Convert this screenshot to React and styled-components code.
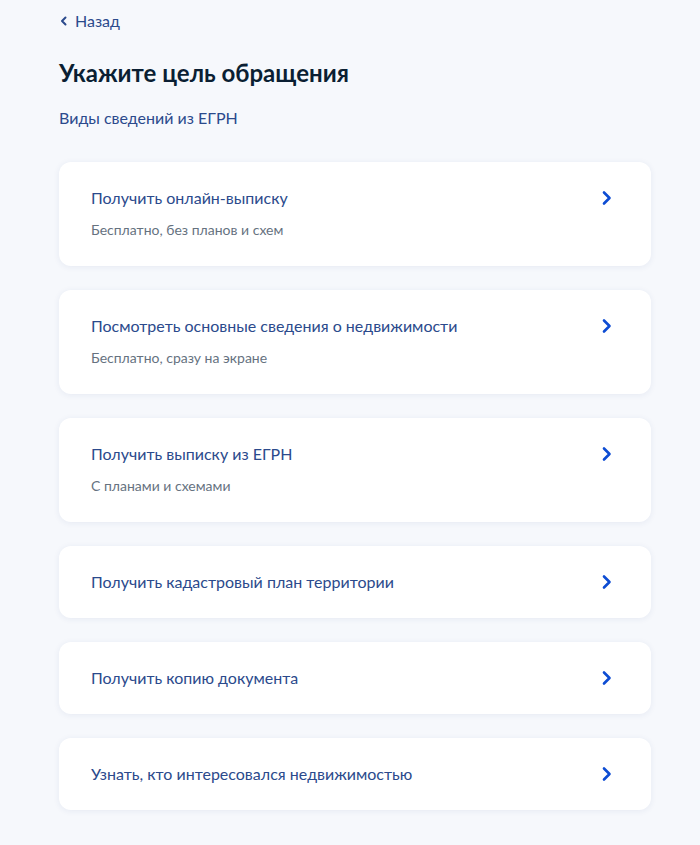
import React from 'react'
import styled, { createGlobalStyle } from 'styled-components'

const GlobalStyle = createGlobalStyle`
  body {
    margin: 0;
    background: #f6f8fc;
    font-family: Lato, "Open Sans", Arial, sans-serif;
  }
`

const Page = styled.div`
  min-height: 845px;
  padding: 10px 49px 40px 59px;
  box-sizing: border-box;
`

const Back = styled.a`
  display: inline-flex;
  align-items: center;
  gap: 7px;
  font-size: 16px;
  line-height: 20px;
  color: #2b4a8c;
  text-decoration: none;
  cursor: pointer;
  margin-left: 1px;
`

const Title = styled.h1`
  margin: 26px 0 0;
  font-size: 24px;
  line-height: 32px;
  font-weight: 700;
  color: #0b1f33;
`

const Subtitle = styled.div`
  margin-top: 19px;
  font-size: 16px;
  line-height: 20px;
  color: #2b4a8c;
`

const List = styled.div`
  margin-top: 34px;
  display: flex;
  flex-direction: column;
  gap: 24px;
`

const Card = styled.div`
  background: #fff;
  border-radius: 12px;
  box-shadow: 0 1px 6px rgba(40, 70, 130, 0.08);
  padding: ${p => (p.$hint ? '24px 32px 26px 32px' : '24px 32px 24px 32px')};
  display: flex;
  align-items: flex-start;
  justify-content: space-between;
  cursor: pointer;
`

const Text = styled.div`
  display: flex;
  flex-direction: column;
  gap: 10px;
`

const Name = styled.div`
  font-size: 16px;
  line-height: 24px;
  color: #2b4a8c;
`

const Hint = styled.div`
  font-size: 14px;
  line-height: 20px;
  color: #66727f;
`

const Arrow = styled.div`
  width: 24px;
  height: 24px;
  display: flex;
  align-items: center;
  justify-content: center;
`

const Chevron = ({ size = 16, color = '#0d4cd3', width = 2.6 }) => (
  <svg width={size} height={size} viewBox="0 0 16 16" fill="none">
    <path d="M5 2.5 L10.5 8 L5 13.5" stroke={color} strokeWidth={width} strokeLinecap="round" strokeLinejoin="round" />
  </svg>
)

const ChevronLeft = () => (
  <svg width="8" height="10" viewBox="0 0 8 10" fill="none">
    <path d="M5.5 1.5 L2 5 L5.5 8.5" stroke="#2b4a8c" strokeWidth="2" strokeLinecap="round" strokeLinejoin="round" />
  </svg>
)

const options = [
  { name: 'Получить онлайн-выписку', hint: 'Бесплатно, без планов и схем' },
  { name: 'Посмотреть основные сведения о недвижимости', hint: 'Бесплатно, сразу на экране' },
  { name: 'Получить выписку из ЕГРН', hint: 'С планами и схемами' },
  { name: 'Получить кадастровый план территории' },
  { name: 'Получить копию документа' },
  { name: 'Узнать, кто интересовался недвижимостью' },
]

const App = () => {
  return (
    <>
      <GlobalStyle />
      <Page>
        <Back>
          <ChevronLeft />
          Назад
        </Back>
        <Title>Укажите цель обращения</Title>
        <Subtitle>Виды сведений из ЕГРН</Subtitle>
        <List>
          {options.map(o => (
            <Card key={o.name} $hint={!!o.hint}>
              <Text>
                <Name>{o.name}</Name>
                {o.hint && <Hint>{o.hint}</Hint>}
              </Text>
              <Arrow>
                <Chevron />
              </Arrow>
            </Card>
          ))}
        </List>
      </Page>
    </>
  )
}

export default App
